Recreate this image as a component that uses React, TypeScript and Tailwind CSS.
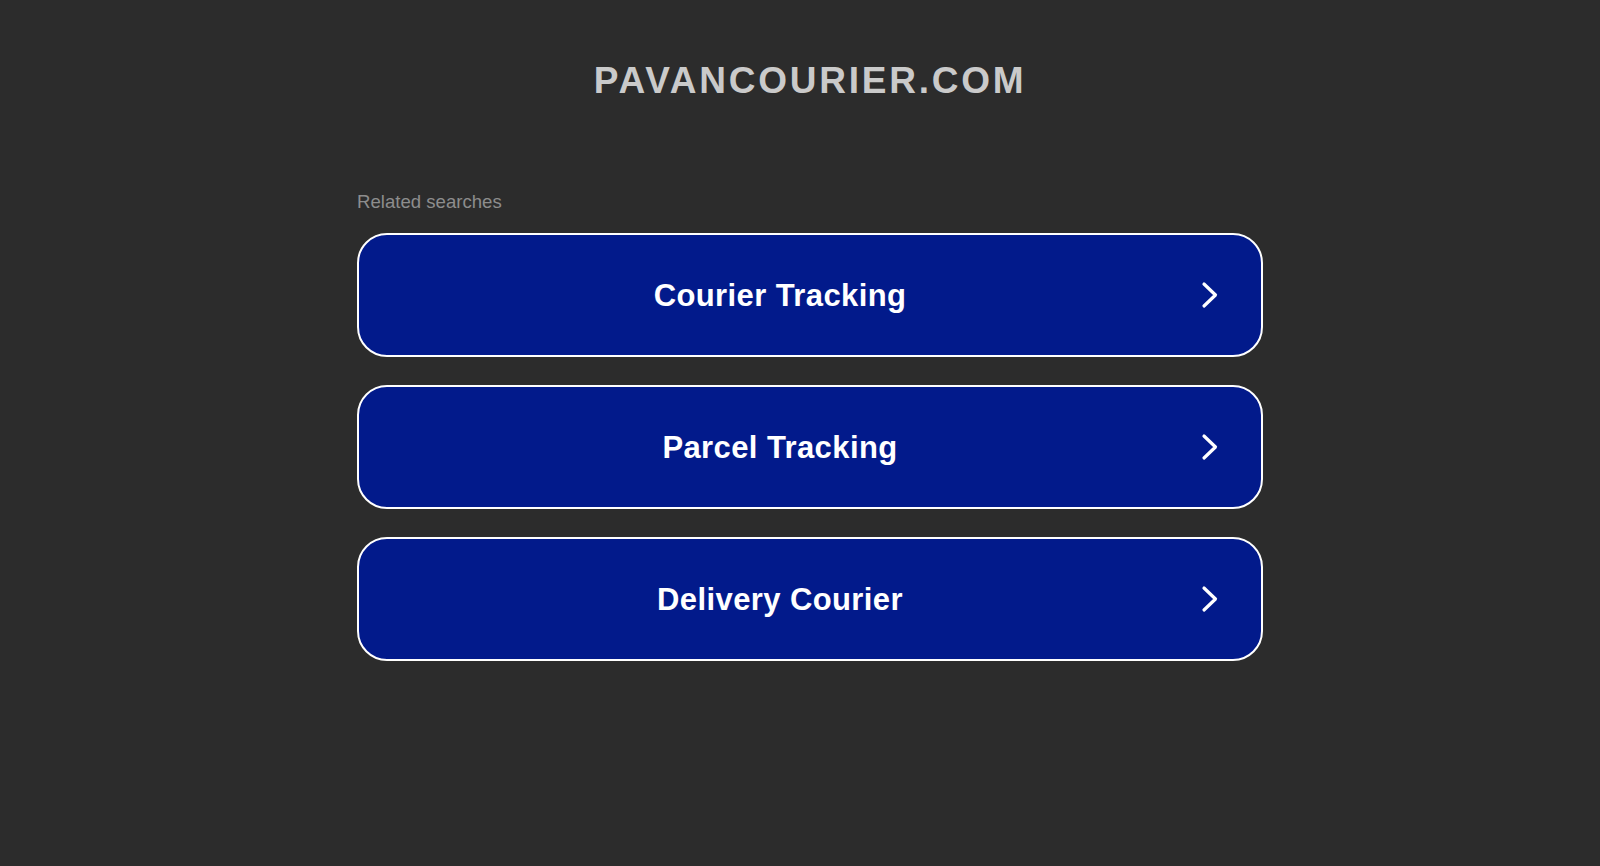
const SEARCHES = ["Courier Tracking", "Parcel Tracking", "Delivery Courier"]

const Chevron = () => (
  <svg width="18" height="28" viewBox="0 0 18 28" fill="none" className="shrink-0">
    <polyline
      points="3,3 14.5,14 3,25"
      stroke="white"
      strokeWidth="3.2"
      strokeLinecap="round"
      strokeLinejoin="round"
    />
  </svg>
)

const App = () => {
  return (
    <div
      className="min-h-screen w-full bg-[#2c2c2c] pl-[20px]"
      style={{ fontFamily: '"Liberation Sans", Arial, sans-serif' }}
    >
      <div className="mx-auto flex w-[906px] flex-col">
        {/* Header */}
        <h1 className="mt-[60px] text-center text-[37px] font-bold leading-[42px] tracking-[2.75px] text-[#cacaca]">
          PAVANCOURIER.COM
        </h1>

        {/* Related searches */}
        <p className="mt-[89px] text-[18.6px] leading-[21px] text-[#8d8d8d]">Related searches</p>

        <div className="mt-[21px] flex flex-col gap-[28px]">
          {SEARCHES.map((label) => (
            <a
              key={label}
              href="#"
              className="flex h-[124px] items-center rounded-[30px] border-2 border-white bg-[#021a8b] pr-[42px] text-white"
            >
              <span className="flex-1 pt-[2px] text-center text-[31px] font-bold tracking-[0.4px]">
                {label}
              </span>
              <Chevron />
            </a>
          ))}
        </div>
      </div>
    </div>
  )
}

export default App
